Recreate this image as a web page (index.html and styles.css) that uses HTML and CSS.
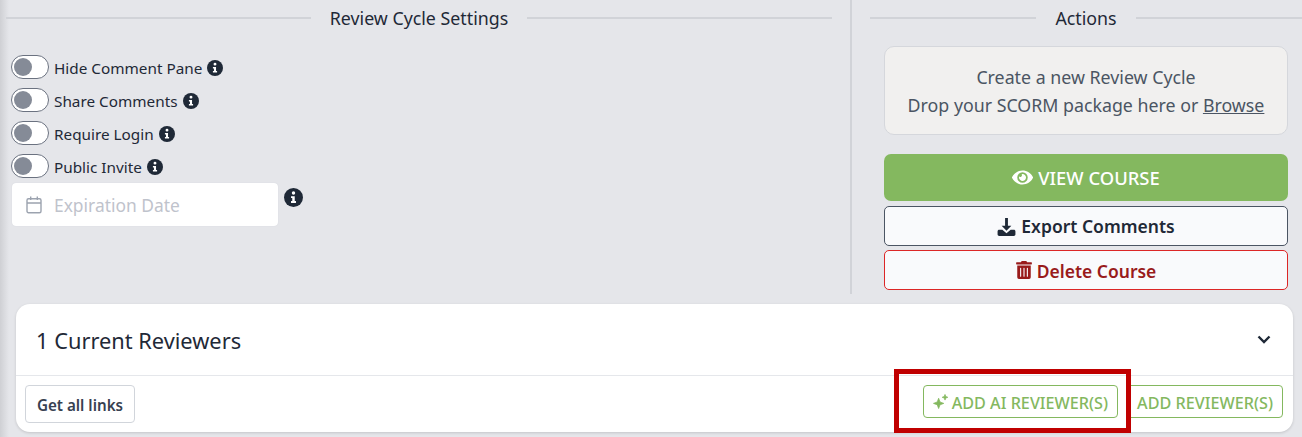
FILE: index.html
```html
<!DOCTYPE html>
<html lang="en">
<head>
  <meta charset="UTF-8">
  <title>Review Cycle Settings</title>
  <link rel="stylesheet" href="styles.css">
</head>
<body>
  <svg class="sprites" width="0" height="0">
    <symbol id="info" viewBox="0 0 20 20">
      <circle cx="10" cy="10" r="10" fill="#1f2937"/>
      <path d="M8.200 5.200a1.800 1.800 0 1 1 3.600 0 1.800 1.800 0 0 1-3.600 0zM7.400 8.600h3.900v5.100h1.300v2H7.400v-2h1.300v-3.100H7.400z" fill="#fff"/>
    </symbol>
  </svg>

  <div class="top">
    <section class="settings">
      <h2 class="divider"><span>Review Cycle Settings</span></h2>
      <div class="toggles">
        <div class="toggle-row"><span class="toggle"></span><span class="toggle-label">Hide Comment Pane</span><svg class="info"><use href="#info"/></svg></div>
        <div class="toggle-row"><span class="toggle"></span><span class="toggle-label">Share Comments</span><svg class="info"><use href="#info"/></svg></div>
        <div class="toggle-row"><span class="toggle"></span><span class="toggle-label">Require Login</span><svg class="info"><use href="#info"/></svg></div>
        <div class="toggle-row"><span class="toggle"></span><span class="toggle-label">Public Invite</span><svg class="info"><use href="#info"/></svg></div>
      </div>
      <div class="date-row">
        <div class="date-input">
          <svg class="calendar" viewBox="0 0 16 18" fill="none" stroke="#9ca3af" stroke-width="1.400">
            <rect x="1" y="2.700" width="14" height="14" rx="1.500"/>
            <path d="M1 7h14M4.700 .5v3.500M11.300 .5v3.500"/>
          </svg>
          <span>Expiration Date</span>
        </div>
        <svg class="info info-lg"><use href="#info"/></svg>
      </div>
    </section>

    <section class="actions">
      <h2 class="divider"><span>Actions</span></h2>
      <div class="action-body">
        <div class="dropzone">
          <div>Create a new Review Cycle</div>
          <div>Drop your SCORM package here or <u>Browse</u></div>
        </div>
        <button class="btn btn-view">
          <svg class="btn-icon eye" viewBox="0 0 576 512" fill="currentColor"><path d="M572.52 241.4C518.29 135.59 410.93 64 288 64S57.68 135.64 3.48 241.41a32.35 32.35 0 0 0 0 29.19C57.71 376.41 165.07 448 288 448s230.32-71.64 284.52-177.41a32.35 32.35 0 0 0 0-29.19zM288 400a144 144 0 1 1 144-144 143.93 143.93 0 0 1-144 144zm0-240a95.31 95.31 0 0 0-25.31 3.79 47.85 47.85 0 0 1-66.9 66.9A95.78 95.78 0 1 0 288 160z"/></svg>
          <span>VIEW COURSE</span>
        </button>
        <button class="btn btn-export">
          <svg class="btn-icon" viewBox="0 0 20 20" fill="currentColor"><path d="M8.500 1h3v8.200h3.600L10 14.500 4.900 9.200h3.600z"/><path d="M.6 15.200c0-1 .7-1.700 1.700-1.700h3.300L10 17l4.400-3.500h3.300c1 0 1.700.7 1.700 1.700v3c0 1-.7 1.800-1.700 1.800H2.300c-1 0-1.700-.8-1.700-1.800z"/></svg>
          <span>Export Comments</span>
        </button>
        <button class="btn btn-delete">
          <svg class="btn-icon trash" viewBox="0 0 448 512" fill="currentColor"><path d="M32 464a48 48 0 0 0 48 48h288a48 48 0 0 0 48-48V128H32zm272-256a16 16 0 0 1 32 0v224a16 16 0 0 1-32 0zm-96 0a16 16 0 0 1 32 0v224a16 16 0 0 1-32 0zm-96 0a16 16 0 0 1 32 0v224a16 16 0 0 1-32 0zM432 32H312l-9.400-18.700A24 24 0 0 0 281.100 0H166.800a23.720 23.720 0 0 0-21.400 13.300L136 32H16A16 16 0 0 0 0 48v32a16 16 0 0 0 16 16h416a16 16 0 0 0 16-16V48a16 16 0 0 0-16-16z"/></svg>
          <span>Delete Course</span>
        </button>
      </div>
    </section>
  </div>

  <section class="card">
    <header class="card-head">
      <h3>1 Current Reviewers</h3>
      <svg class="chevron" viewBox="0 0 14 9" fill="none" stroke="#1f2937" stroke-width="2.400"><path d="M1.500 1.500 7 7l5.500-5.500"/></svg>
    </header>
    <footer class="card-foot">
      <button class="btn-links">Get all links</button>
      <div class="add-buttons">
        <button class="btn-add">
          <svg class="sparkle" viewBox="0 0 16 16" fill="currentColor" stroke="currentColor" stroke-width=".8" stroke-linejoin="round"><path d="M6 4.500 7.500 8.500 11.500 10 7.500 11.500 6 15.500 4.500 11.500 .5 10 4.500 8.500zM12.800 .5l.8 2.200 2.200.8-2.200.8-.8 2.200-.8-2.200-2.200-.8 2.200-.8z"/></svg>
          <span>ADD AI REVIEWER(S)</span>
        </button>
        <button class="btn-add"><span>ADD REVIEWER(S)</span></button>
      </div>
    </footer>
    <div class="highlight"></div>
  </section>
</body>
</html>
```

FILE: styles.css
```css
html, body {
  height: 100%;
}
body {
  margin: 0;
  overflow: hidden;
  background: linear-gradient(to right, #cfd0d4, #e5e6ea 9px);
  font-family: "Noto Sans", "Open Sans", sans-serif;
  color: #1f2937;
}
.sprites {
  position: absolute;
}
.top {
  display: flex;
  height: 294px;
}
.settings {
  box-sizing: border-box;
  width: 852px;
  padding: 0 18px 0 6px;
  border-right: 2px solid #d1d3d8;
}
.actions {
  flex: 1;
  padding-left: 18px;
}
.divider {
  display: flex;
  align-items: center;
  gap: 19px;
  margin: 0;
  height: 36px;
  font-size: 17.800px;
  font-weight: 400;
  white-space: nowrap;
}
.divider::before, .divider::after {
  content: "";
  flex: 1;
  height: 2px;
  background: #d1d3d8;
}
.toggles {
  display: flex;
  flex-direction: column;
  gap: 9px;
  margin: 19px 0 0 5px;
}
.toggle-row {
  display: flex;
  align-items: center;
  height: 24px;
}
.toggle {
  box-sizing: border-box;
  width: 38px;
  height: 24px;
  padding: 2px;
  margin-right: 5px;
  border: 1px solid #6b7280;
  border-radius: 12px;
  background: #fff;
}
.toggle::before {
  content: "";
  display: block;
  width: 18px;
  height: 18px;
  border-radius: 50%;
  background: #858b97;
}
.toggle-label {
  padding-top: 2px;
  font-size: 15.300px;
}
.info {
  width: 16px;
  height: 16px;
  margin: 2px 0 0 5px;
}
.date-row {
  display: flex;
  margin: 5px 0 0 6px;
}
.date-input {
  display: flex;
  align-items: center;
  box-sizing: border-box;
  width: 266px;
  height: 43px;
  padding-left: 14px;
  border-radius: 4px;
  background: #fff;
  box-shadow: 0 0 1px #c9ccd2;
  font-size: 17.400px;
  color: #bfc3cc;
}
.calendar {
  width: 16px;
  height: 18px;
  margin-right: 12px;
}
.info-lg {
  width: 19px;
  height: 19px;
  margin: 5px 0 0 6px;
}
.action-body {
  display: flex;
  flex-direction: column;
  width: 404px;
  margin: 10px 0 0 14px;
}
.dropzone {
  box-sizing: border-box;
  height: 89px;
  padding-top: 16px;
  margin-bottom: 19px;
  border: 1px solid #d5d7dc;
  border-radius: 10px;
  background: #f1f0ef;
  color: #4b5563;
  font-size: 17.800px;
  line-height: 28px;
  text-align: center;
}
.btn {
  display: flex;
  align-items: center;
  justify-content: center;
  gap: 5px;
  height: 40px;
  padding: 0;
  border-radius: 5px;
  background: #f9fafc;
  font-family: inherit;
  font-size: 17.500px;
  font-weight: 600;
}
.btn-icon {
  width: 19px;
  height: 19px;
}
.btn-view {
  height: 47px;
  margin-bottom: 5px;
  border: 0;
  border-radius: 7px;
  background: #84b85f;
  color: #fff;
  font-size: 18.400px;
  font-weight: 500;
}
.eye {
  width: 21px;
}
.btn-export {
  margin-bottom: 4px;
  border: 1px solid #4b5563;
  color: #1f2937;
}
.btn-delete {
  border: 1px solid #dc2626;
  color: #991b1b;
}
.btn-delete span {
  padding-top: 1px;
}
.trash {
  width: 16px;
  height: 18px;
}
.card {
  position: relative;
  display: flex;
  flex-direction: column;
  width: 1277px;
  height: 128px;
  margin: 10px 0 0 16px;
  border-radius: 14px;
  background: #fff;
  box-shadow: 0 1px 3px rgba(0, 0, 0, 0.15);
}
.card-head {
  display: flex;
  align-items: center;
  justify-content: space-between;
  height: 71px;
  padding: 0 22px 0 20px;
  border-bottom: 1px solid #e5e7eb;
}
.card-head h3 {
  margin: 0;
  padding-top: 2px;
  font-size: 21.800px;
  font-weight: 400;
}
.chevron {
  width: 14px;
  height: 9px;
}
.card-foot {
  display: flex;
  justify-content: space-between;
  padding: 9px 10px 0 9px;
}
.btn-links {
  box-sizing: border-box;
  width: 110px;
  height: 38px;
  padding-top: 3px;
  border: 1px solid #d1d5db;
  border-radius: 4px;
  background: #fff;
  color: #374151;
  font-family: inherit;
  font-size: 15.200px;
  font-weight: 600;
}
.add-buttons {
  display: flex;
  gap: 9px;
}
.btn-add {
  display: flex;
  align-items: center;
  gap: 4px;
  height: 33px;
  padding: 0 9px;
  border: 1px solid #84b85f;
  border-radius: 4px;
  background: #fff;
  color: #84b85f;
  font-family: inherit;
  font-size: 16.200px;
  font-weight: 500;
  white-space: nowrap;
}
.btn-add span {
  padding-top: 3px;
}
.sparkle {
  width: 15px;
  height: 15px;
}
.highlight {
  position: absolute;
  left: 878px;
  top: 65px;
  width: 227px;
  height: 54px;
  border: 5px solid #c00000;
}
```
